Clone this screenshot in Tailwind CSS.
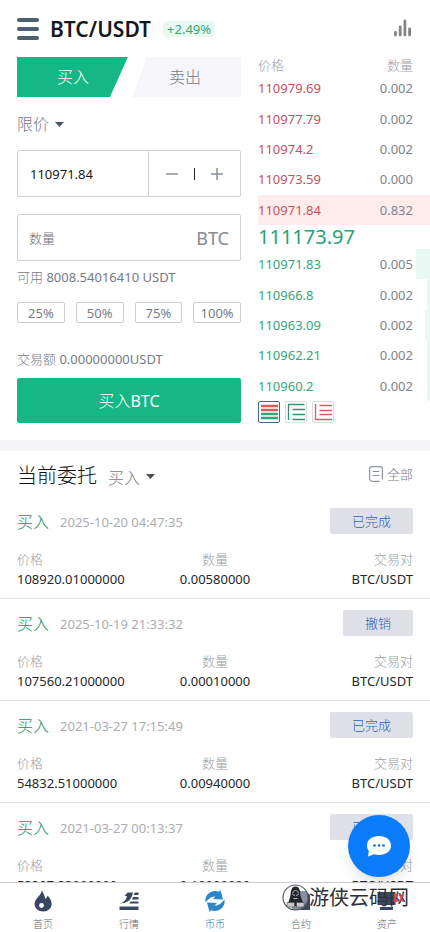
<!DOCTYPE html>
<html lang="zh-CN">
<head>
<meta charset="utf-8">
<meta name="viewport" content="width=device-width, initial-scale=1">
<title>BTC/USDT</title>
<script src="https://cdn.jsdelivr.net/npm/@tailwindcss/browser@4"></script>
</head>
<body class="bg-white font-['Noto_Sans','Noto_Sans_CJK_SC',sans-serif] font-light text-[13px] leading-5 text-[#757b88]">
<div class="relative flex h-dvh flex-col overflow-hidden">
<main class="min-h-0 flex-1 overflow-y-auto [scrollbar-width:none]">

  <header class="flex h-[57px] items-center px-[17px]">
    <button type="button" aria-label="菜单" class="flex h-[22px] w-[22px] flex-col justify-between">
      <span class="h-1 w-full rounded-full bg-[#4e6072]"></span>
      <span class="h-1 w-full rounded-full bg-[#4e6072]"></span>
      <span class="h-1 w-full rounded-full bg-[#4e6072]"></span>
    </button>
    <h1 class="ml-[11px] text-[21px] font-semibold text-[#14171c]">BTC/USDT</h1>
    <span class="ml-3 rounded-sm bg-[#e9f9f2] px-1 leading-4 font-normal text-[#3aa873]">+2.49%</span>
    <a href="#chart" aria-label="K线图" class="ml-auto">
      <svg class="h-[22px] w-[22px]" viewBox="0 0 22 22" stroke="#858585" stroke-width="2.800" stroke-linecap="round"><path d="M4.500 14.500v2.500M9.200 9v8M13.900 3v14M18.600 11v6"/></svg>
    </a>
  </header>

  <section class="flex gap-[17px] pl-[17px]">
    <form class="min-w-0 flex-[224]">
      <div class="flex h-10 text-base">
        <button type="button" class="w-1/2 bg-[#15b785] text-white [clip-path:polygon(0_0,99%_0,83%_100%,0_100%)]">买入</button>
        <button type="button" class="w-1/2 bg-[#f5f5fa] [clip-path:polygon(16%_0,100%_0,100%_100%,3%_100%)]">卖出</button>
      </div>
      <button type="button" class="mt-4 flex h-[22px] items-center gap-[6px] text-base">限价
        <svg class="h-[5px] w-[9px]" viewBox="0 0 9 5" fill="#4b5563"><path d="M0 0h9L4.500 5z"/></svg>
      </button>
      <div class="mt-[15px] flex h-[47px] rounded-xs border border-[#cfd1d5]">
        <input aria-label="价格" value="110971.84" class="w-0 min-w-0 flex-1 pl-3 font-normal text-[#17191d] outline-none">
        <div class="flex w-[92px] items-center justify-between border-l border-[#cfd1d5] px-4">
          <button type="button" aria-label="减少"><svg class="h-[14px] w-[14px]" viewBox="0 0 14 14" stroke="#8b909a" stroke-width="1.500"><path d="M1 7h12"/></svg></button>
          <span class="h-3 w-px bg-[#222]"></span>
          <button type="button" aria-label="增加"><svg class="h-[14px] w-[14px]" viewBox="0 0 14 14" stroke="#8b909a" stroke-width="1.500"><path d="M1 7h12M7 1v12"/></svg></button>
        </div>
      </div>
      <label class="mt-[17px] flex h-[47px] items-center rounded-xs border border-[#cfd1d5] px-[11px]">
        <input aria-label="数量" placeholder="数量" class="w-0 min-w-0 flex-1 outline-none placeholder:text-[#6b6e73]">
        <span class="text-lg font-normal text-[#858a94]">BTC</span>
      </label>
      <p class="mt-[6px]">可用 <span class="font-normal">8008.54016410 USDT</span></p>
      <div class="mt-[15px] grid grid-cols-4 gap-[11px] font-normal">
        <button type="button" class="h-[21px] rounded-xs border border-[#c9ccd3] leading-[18px]">25%</button>
        <button type="button" class="h-[21px] rounded-xs border border-[#c9ccd3] leading-[18px]">50%</button>
        <button type="button" class="h-[21px] rounded-xs border border-[#c9ccd3] leading-[18px]">75%</button>
        <button type="button" class="h-[21px] rounded-xs border border-[#c9ccd3] leading-[18px]">100%</button>
      </div>
      <p class="mt-[26px]">交易额 <span class="font-normal">0.00000000USDT</span></p>
      <button type="submit" class="mt-[9px] h-[45px] w-full rounded-xs bg-[#15b785] text-base text-white">买入<span class="font-normal">BTC</span></button>
    </form>

    <div class="min-w-0 flex-[172]">
      <div class="flex h-4 items-center justify-between pr-[17px] text-[#9b9ea5]"><span>价格</span><span>数量</span></div>
      <div class="grid h-[152px] grid-rows-5 font-normal text-[#c94f60]">
        <div class="flex items-center justify-between pr-[17px]"><span>110979.69</span><span class="text-[#7d8390]">0.002</span></div>
        <div class="flex items-center justify-between pr-[17px]"><span>110977.79</span><span class="text-[#7d8390]">0.002</span></div>
        <div class="flex items-center justify-between pr-[17px]"><span>110974.2</span><span class="text-[#7d8390]">0.002</span></div>
        <div class="flex items-center justify-between pr-[17px]"><span>110973.59</span><span class="text-[#7d8390]">0.000</span></div>
        <div class="flex items-center justify-between bg-[#feeced] pr-[17px]"><span>110971.84</span><span class="text-[#7d8390]">0.832</span></div>
      </div>
      <p class="h-6 text-xl leading-6 font-normal text-[#27a376]">111173.97</p>
      <div class="grid h-[152px] grid-rows-5 font-normal text-[#35a57a]">
        <div class="flex items-center justify-between bg-linear-to-l from-[#e8f8f3] from-[14px] to-transparent to-[14px] pr-[17px]"><span>110971.83</span><span class="text-[#7d8390]">0.005</span></div>
        <div class="flex items-center justify-between bg-linear-to-l from-[#e8f8f3] from-[3px] to-transparent to-[3px] pr-[17px]"><span>110966.8</span><span class="text-[#7d8390]">0.002</span></div>
        <div class="flex items-center justify-between bg-linear-to-l from-[#e8f8f3] from-[5px] to-transparent to-[5px] pr-[17px]"><span>110963.09</span><span class="text-[#7d8390]">0.002</span></div>
        <div class="flex items-center justify-between bg-linear-to-l from-[#e8f8f3] from-[3px] to-transparent to-[3px] pr-[17px]"><span>110962.21</span><span class="text-[#7d8390]">0.002</span></div>
        <div class="flex items-center justify-between bg-linear-to-l from-[#e8f8f3] from-[3px] to-transparent to-[3px] pr-[17px]"><span>110960.2</span><span class="text-[#7d8390]">0.002</span></div>
      </div>
      <div class="flex gap-[5px]">
        <button type="button" aria-label="全部盘口" class="h-[22px] w-[22px] rounded-xs border border-[#41639a]">
          <svg class="h-5 w-5" viewBox="0 0 20 20" fill="none"><path d="M2 4h17M2 8h17" stroke="#dc5a5a" stroke-width="2.400"/><path d="M2 12h17M2 16h17" stroke="#37a374" stroke-width="2.400"/></svg>
        </button>
        <button type="button" aria-label="买盘" class="h-[22px] w-[22px] rounded-xs border border-[#d9dbe0]">
          <svg class="h-5 w-5" viewBox="0 0 20 20" fill="none" stroke="#37936f" stroke-width="1.300"><path d="M2.500 18V2.500h16M6.500 7.500H19M6.500 12.500H19M6.500 17.500H19"/></svg>
        </button>
        <button type="button" aria-label="卖盘" class="h-[22px] w-[22px] rounded-xs border border-[#d9dbe0]">
          <svg class="h-5 w-5" viewBox="0 0 20 20" fill="none" stroke="#d9596a" stroke-width="1.300"><path d="M2.500 2v15.500h16.500M6.500 3.500H19M6.500 8.500H19M6.500 12.500H19"/></svg>
        </button>
      </div>
    </div>
  </section>

  <section class="mt-[17px] border-t-[11px] border-[#f5f5f7]">
    <div class="flex h-[46px] items-center px-[17px]">
      <div class="flex items-center gap-[11px] pt-1">
        <h2 class="text-xl text-[#0e1013]">当前委托</h2>
        <button type="button" class="flex items-center gap-[6px] pt-1 text-base text-[#7b8086]">买入
          <svg class="mb-1 h-[5px] w-[9px]" viewBox="0 0 9 5" fill="#4b5054"><path d="M0 0h9L4.500 5z"/></svg>
        </button>
      </div>
      <a href="#all" class="ml-auto flex items-center gap-1">
        <svg class="h-4 w-[14px]" viewBox="0 0 14 16" fill="none" stroke="#90969c" stroke-width="1.200"><path d="M3.500 15.400h7M.6 12.500V2.600a2 2 0 0 1 2-2h8.800a2 2 0 0 1 2 2v10.800M.6 12.500a2.900 2.900 0 0 0 2.900 2.900M3.500 5.500h7M3.500 9.500h7"/></svg>全部
      </a>
    </div>

    <article class="border-b border-[#dfe1e4] px-[17px] pt-[11px] pb-[9px]">
      <div class="flex h-[26px] items-center"><span class="pt-[2px] text-base text-[#119362]">买入</span><time class="ml-[11px] pt-[2px] font-normal text-[#abadb1]">2025-10-20 04:47:35</time><button type="button" class="ml-auto h-[26px] w-[83px] rounded-xs bg-[#e0e1e8] text-[#2c62ba]">已完成</button></div>
      <dl class="mt-[15px] grid grid-cols-3">
        <div><dt class="text-[#9b9ea3]">价格</dt><dd class="font-normal text-[#24272b]">108920.01000000</dd></div>
        <div class="text-center"><dt class="text-[#9b9ea3]">数量</dt><dd class="font-normal text-[#24272b]">0.00580000</dd></div>
        <div class="text-right"><dt class="text-[#9b9ea3]">交易对</dt><dd class="font-normal text-[#24272b]">BTC/USDT</dd></div>
      </dl>
    </article>
    <article class="border-b border-[#dfe1e4] px-[17px] pt-[11px] pb-[9px]">
      <div class="flex h-[26px] items-center"><span class="pt-[2px] text-base text-[#119362]">买入</span><time class="ml-[11px] pt-[2px] font-normal text-[#abadb1]">2025-10-19 21:33:32</time><button type="button" class="ml-auto h-[26px] w-[70px] rounded-xs bg-[#e0e1e8] text-[#2c62ba]">撤销</button></div>
      <dl class="mt-[15px] grid grid-cols-3">
        <div><dt class="text-[#9b9ea3]">价格</dt><dd class="font-normal text-[#24272b]">107560.21000000</dd></div>
        <div class="text-center"><dt class="text-[#9b9ea3]">数量</dt><dd class="font-normal text-[#24272b]">0.00010000</dd></div>
        <div class="text-right"><dt class="text-[#9b9ea3]">交易对</dt><dd class="font-normal text-[#24272b]">BTC/USDT</dd></div>
      </dl>
    </article>
    <article class="border-b border-[#dfe1e4] px-[17px] pt-[11px] pb-[9px]">
      <div class="flex h-[26px] items-center"><span class="pt-[2px] text-base text-[#119362]">买入</span><time class="ml-[11px] pt-[2px] font-normal text-[#abadb1]">2021-03-27 17:15:49</time><button type="button" class="ml-auto h-[26px] w-[83px] rounded-xs bg-[#e0e1e8] text-[#2c62ba]">已完成</button></div>
      <dl class="mt-[15px] grid grid-cols-3">
        <div><dt class="text-[#9b9ea3]">价格</dt><dd class="font-normal text-[#24272b]">54832.51000000</dd></div>
        <div class="text-center"><dt class="text-[#9b9ea3]">数量</dt><dd class="font-normal text-[#24272b]">0.00940000</dd></div>
        <div class="text-right"><dt class="text-[#9b9ea3]">交易对</dt><dd class="font-normal text-[#24272b]">BTC/USDT</dd></div>
      </dl>
    </article>
    <article class="border-b border-[#dfe1e4] px-[17px] pt-[11px] pb-[9px]">
      <div class="flex h-[26px] items-center"><span class="pt-[2px] text-base text-[#119362]">买入</span><time class="ml-[11px] pt-[2px] font-normal text-[#abadb1]">2021-03-27 00:13:37</time><button type="button" class="ml-auto h-[26px] w-[83px] rounded-xs bg-[#e0e1e8] text-[#2c62ba]">已完成</button></div>
      <dl class="mt-[15px] grid grid-cols-3">
        <div><dt class="text-[#9b9ea3]">价格</dt><dd class="font-normal text-[#24272b]">53397.33000000</dd></div>
        <div class="text-center"><dt class="text-[#9b9ea3]">数量</dt><dd class="font-normal text-[#24272b]">0.10000000</dd></div>
        <div class="text-right"><dt class="text-[#9b9ea3]">交易对</dt><dd class="font-normal text-[#24272b]">BTC/USDT</dd></div>
      </dl>
    </article>
  </section>
</main>

<nav class="grid h-[50px] grid-cols-5 border-t border-[#c9cbce] bg-white pt-[7px] text-[10px] leading-4 text-[#64686e]">
  <a href="#home" class="flex flex-col items-center gap-1">
    <svg class="h-[22px] w-[22px]" viewBox="0 0 22 22"><path d="M9.800 0c.2 2 3.200 4.500 3.400 8.800 1.300-.5 2-1.700 2.200-3.300 2.400 2 4.200 5 4.200 8.300 0 4.700-3.700 7.700-8.400 7.700S2.600 18.500 2.600 14c0-6 6.800-8 7.200-14z" fill="#3a4763"/><circle cx="9.500" cy="15.500" r="2.400" fill="#fff"/></svg>首页</a>
  <a href="#market" class="flex flex-col items-center gap-1">
    <svg class="h-[22px] w-[22px]" viewBox="0 0 22 22" fill="#3a4763"><path d="M1.500 16.500h19v3.500h-19zM1.500 13.500c5-1 6.500-4 7.500-7.500H6.500L9.500 2.500H15c-1.500 7-5 11-13.500 11zM17 2.500h3.500V5h-5zM15 7h5.500v2.500H14zM13 11.500h7.500v2H11z"/></svg>行情</a>
  <a href="#trade" aria-current="page" class="flex flex-col items-center gap-1 text-[#0f6fbd]">
    <svg class="h-[22px] w-[22px]" viewBox="0 0 22 22" fill="#2b86cb"><path d="M1.500 12.500C.3 6 5.500 1 11 1c1.500 0 2.800.3 4 .8L16.500 0 19 9.500l-10-.6 2.300-2.400C7.500 6 4.500 9 1.500 12.500z"/><path d="M20.500 9.500c1.200 6.500-4 11.500-9.500 11.500-1.500 0-2.800-.3-4-.8L5.500 22 3 12.500l10 .6-2.300 2.400c3.800.5 6.800-2.500 9.800-6z"/></svg>币币</a>
  <a href="#contract" class="flex flex-col items-center gap-1">
    <svg class="h-[22px] w-[22px]" viewBox="0 0 22 22" fill="#3a4763"><path d="M2 1h14l4 4v15H2z"/></svg>合约</a>
  <a href="#assets" class="flex flex-col items-center gap-1">
    <svg class="h-[22px] w-[22px]" viewBox="0 0 22 22" fill="#3a4763"><path d="M1.500 2h18v13h-18zM4 17h13v3H4z"/></svg>资产</a>
</nav>

<button type="button" aria-label="在线客服" class="absolute right-5 bottom-[55px] flex h-[62px] w-[62px] items-center justify-center rounded-full bg-[#0a7cfb] shadow-lg">
  <svg class="h-6 w-6" viewBox="0 0 24 24"><path d="M12 2c6.600 0 12 3.500 12 9.500s-5.400 9.500-12 9.500c-1.800 0-3.400-.3-5-.8L1 22.500l.8-5.500C.6 15.300 0 13.500 0 11.500 0 5.500 5.400 2 12 2z" fill="#fff"/><g fill="#0a6ce0"><circle cx="7.500" cy="11.500" r="1.300"/><circle cx="12" cy="11.500" r="1.300"/><circle cx="16.500" cy="11.500" r="1.300"/></g></svg>
</button>

<div class="pointer-events-none absolute right-[21px] bottom-[21px] flex items-center">
  <svg class="h-[27px] w-[27px]" viewBox="0 0 27 27"><circle cx="13.500" cy="13.500" r="12.500" fill="#fff" fill-opacity=".4" stroke="#55595f" stroke-width="1.200"/><path d="M6 22c0-5 2-7 2.500-11C9 4.500 10.500 2.500 13.500 2.500S18 4.500 18.500 11C19 15 21.500 17 21.500 22z" fill="#24262b"/><path d="M10.500 9.500c.5-4 5.500-4 6 0M10.500 10.500l2.500 1M16.500 10.500l-2.500 1M11.500 14.500h4" fill="none" stroke="#b9babd"/><path d="M5 18.500h7.500v4.500H5zM14.500 18.500H22v4.500h-7.500z" fill="#c9cacd" stroke="#44474d" stroke-width=".6"/></svg>
  <span class="relative text-[20px] leading-[26px] font-normal text-[#2f3136]">游侠云码网
    <svg class="absolute right-1 top-[7px] h-3 w-3" viewBox="0 0 12 12" fill="none" stroke="#e8474f" stroke-width="1.500"><path d="M1 2l3 8M4 2L1 10M6 2l4.500 8M10.500 2L6 10"/></svg>
  </span>
</div>
</div>
</body>
</html>
